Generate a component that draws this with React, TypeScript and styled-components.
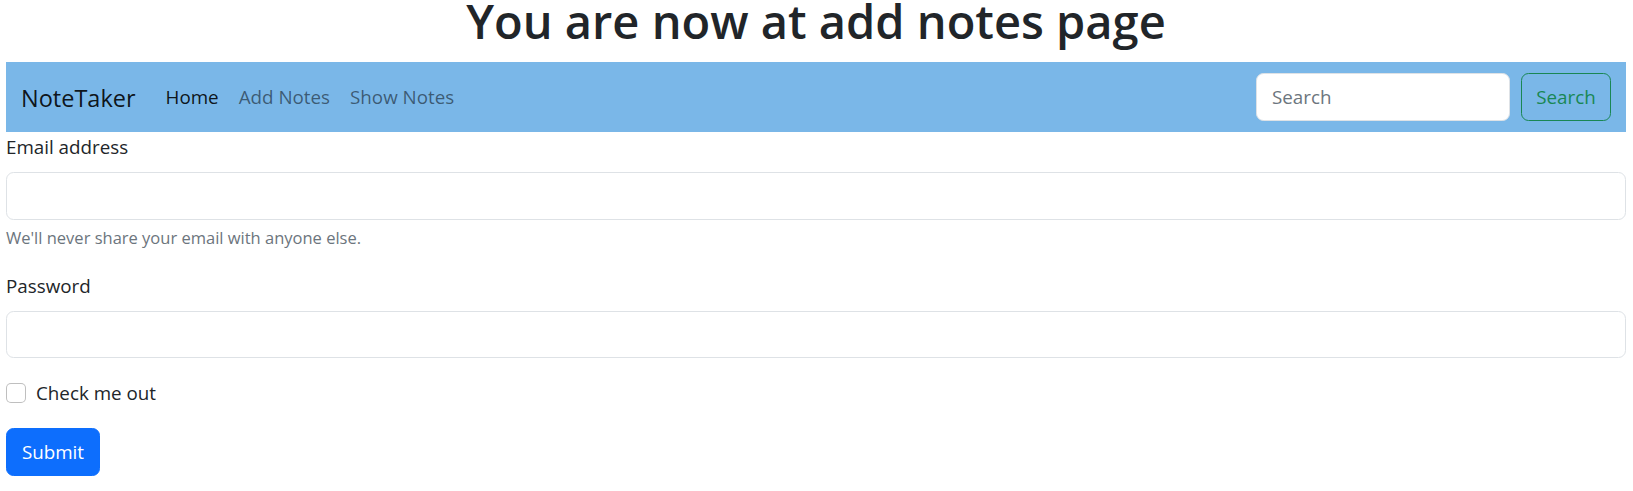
import React from "react";
import styled, { createGlobalStyle } from "styled-components";

const GlobalStyle = createGlobalStyle`
  html, body {
    margin: 0;
    padding: 0;
    background: #ffffff;
  }
  body {
    font-family: "Open Sans", "Noto Sans", "Liberation Sans", sans-serif;
    color: #212529;
    font-size: 18.8px;
    line-height: 1.5;
  }
  *, *::before, *::after { box-sizing: border-box; }
`;

const Page = styled.div`
  padding: 0 7px 0 6px;
`;

const Heading = styled.h1`
  margin: 0;
  height: 62px;
  font-size: 47px;
  font-weight: 600;
  line-height: 43px;
  text-align: center;
  color: #212529;
`;

const Navbar = styled.nav`
  display: flex;
  align-items: center;
  background: #7ab7e8;
  padding: 11px 15px;
  height: 70px;
`;

const Brand = styled.a`
  font-size: 23.5px;
  line-height: 37.5px;
  padding: 8px 0 4px;
  margin-right: 20px;
  color: rgba(0, 0, 0, 0.9);
  text-decoration: none;
`;

const NavList = styled.ul`
  display: flex;
  list-style: none;
  margin: 0;
  padding: 0;
  flex: 1;
`;

const NavLink = styled.a<{ $active?: boolean }>`
  display: block;
  padding: 10px 10px;
  font-size: 18.8px;
  line-height: 30px;
  text-decoration: none;
  color: ${(p) => (p.$active ? "rgba(0,0,0,0.9)" : "rgba(0,0,0,0.52)")};
`;

const SearchForm = styled.form`
  display: flex;
  gap: 11px;
`;

const SearchInput = styled.input`
  width: 254px;
  height: 47.5px;
  padding: 7.5px 15px;
  font: inherit;
  font-size: 18.8px;
  color: #212529;
  background: #fff;
  border: 1px solid #dee2e6;
  border-radius: 7.5px;
  outline: none;
  &::placeholder { color: #6c757d; }
`;

const OutlineButton = styled.button`
  height: 47.5px;
  width: 90px;
  padding: 0;
  font: inherit;
  font-size: 18.8px;
  color: #198754;
  background: transparent;
  border: 1px solid #198754;
  border-radius: 7.5px;
`;

const Form = styled.form`
  display: flex;
  flex-direction: column;
`;

const Group = styled.div`
  margin-bottom: 20px;
`;

const Label = styled.label`
  display: block;
  font-size: 18.8px;
  line-height: 30px;
  margin-bottom: 10px;
`;

const TextInput = styled.input`
  display: block;
  width: 100%;
  height: 47.5px;
  padding: 7.5px 15px;
  font: inherit;
  font-size: 18.8px;
  background: #fff;
  border: 1px solid #dee2e6;
  border-radius: 7.5px;
  outline: none;
`;

const HelpText = styled.div`
  margin-top: 5px;
  font-size: 16.5px;
  line-height: 26.25px;
  color: #6c757d;
`;

const CheckRow = styled.div`
  display: flex;
  align-items: flex-start;
  min-height: 30px;
  margin-bottom: 20px;
`;

const CheckBox = styled.span`
  width: 20px;
  height: 20px;
  margin-top: 5px;
  margin-right: 10px;
  border: 1px solid rgba(0, 0, 0, 0.25);
  border-radius: 5px;
  background: #fff;
  flex: none;
`;

const CheckLabel = styled.label`
  font-size: 18.8px;
  line-height: 30px;
`;

const PrimaryButton = styled.button`
  align-self: flex-start;
  width: 94px;
  height: 47.5px;
  padding: 0;
  font: inherit;
  font-size: 18.8px;
  color: #fff;
  background: #0d6efd;
  border: 1px solid #0d6efd;
  border-radius: 7.5px;
`;

export default function App() {
  return (
    <>
      <GlobalStyle />
      <Page>
        <Heading>You are now at add notes page</Heading>
        <Navbar>
          <Brand href="#">NoteTaker</Brand>
          <NavList>
            <li><NavLink $active href="#">Home</NavLink></li>
            <li><NavLink href="#">Add Notes</NavLink></li>
            <li><NavLink href="#">Show Notes</NavLink></li>
          </NavList>
          <SearchForm onSubmit={(e) => e.preventDefault()}>
            <SearchInput type="search" placeholder="Search" />
            <OutlineButton type="submit">Search</OutlineButton>
          </SearchForm>
        </Navbar>
        <Form onSubmit={(e) => e.preventDefault()}>
          <Group>
            <Label>Email address</Label>
            <TextInput type="email" />
            <HelpText>We'll never share your email with anyone else.</HelpText>
          </Group>
          <Group>
            <Label>Password</Label>
            <TextInput type="password" />
          </Group>
          <CheckRow>
            <CheckBox />
            <CheckLabel>Check me out</CheckLabel>
          </CheckRow>
          <PrimaryButton type="submit">Submit</PrimaryButton>
        </Form>
      </Page>
    </>
  );
}
